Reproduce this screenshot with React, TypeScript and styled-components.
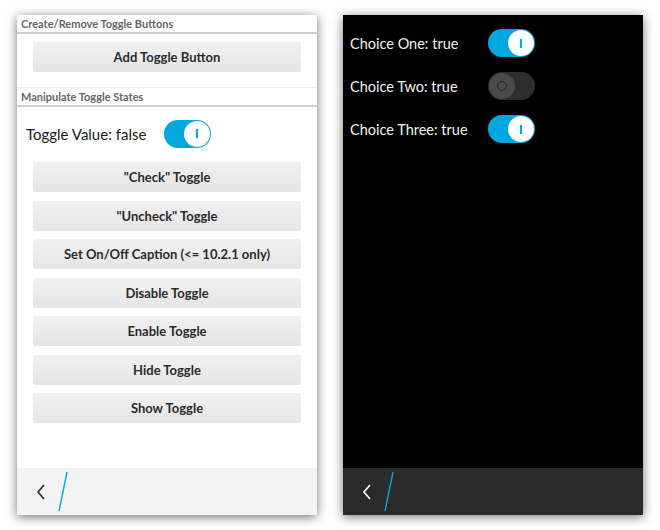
import React from 'react';
import styled, { createGlobalStyle } from 'styled-components';

const GlobalStyle = createGlobalStyle`
  html, body {
    margin: 0;
    padding: 0;
    background: #ffffff;
  }
  body {
    font-family: Lato, 'Open Sans', 'Liberation Sans', sans-serif;
  }
`;

const buttons = [
  '"Check" Toggle',
  '"Uncheck" Toggle',
  'Set On/Off Caption (<= 10.2.1 only)',
  'Disable Toggle',
  'Enable Toggle',
  'Hide Toggle',
  'Show Toggle',
];

const choices = [
  { label: 'Choice One: true', on: true },
  { label: 'Choice Two: true', on: false },
  { label: 'Choice Three: true', on: true },
];

function Toggle({ on }: { on: boolean }) {
  return (
    <Track $on={on}>
      <Knob $on={on}>{on ? <OnMark /> : <OffMark />}</Knob>
    </Track>
  );
}

function ActionBar({ dark }: { dark?: boolean }) {
  return (
    <Bar $dark={dark}>
      <svg width="12" height="18" viewBox="0 0 12 18">
        <polyline
          points="9,2 3,9 9,16"
          fill="none"
          stroke={dark ? '#f0f0f0' : '#333'}
          strokeWidth="1.8"
        />
      </svg>
      <svg width="12" height="42" viewBox="0 0 12 42">
        <line x1="10" y1="1" x2="2" y2="40" stroke="#00a8df" strokeWidth="1.4" />
      </svg>
    </Bar>
  );
}

export default function App() {
  return (
    <>
      <GlobalStyle />
      <Page>
        <Phone>
          <Content>
            <SectionHeader>Create/Remove Toggle Buttons</SectionHeader>
            <AddArea>
              <Button>Add Toggle Button</Button>
            </AddArea>
            <SectionHeader $divided>Manipulate Toggle States</SectionHeader>
            <ValueRow>
              <ValueLabel>Toggle Value: false</ValueLabel>
              <Toggle on />
            </ValueRow>
            <ButtonList>
              {buttons.map((b) => (
                <Button key={b}>{b}</Button>
              ))}
            </ButtonList>
          </Content>
          <ActionBar />
        </Phone>

        <Phone $dark>
          <Content>
            <ChoiceList>
              {choices.map((c) => (
                <ChoiceRow key={c.label}>
                  <ChoiceLabel>{c.label}</ChoiceLabel>
                  <Toggle on={c.on} />
                </ChoiceRow>
              ))}
            </ChoiceList>
          </Content>
          <ActionBar dark />
        </Phone>
      </Page>
    </>
  );
}

const Page = styled.div`
  display: flex;
  gap: 26px;
  padding: 15px 17px;
`;

const Phone = styled.div<{ $dark?: boolean }>`
  display: flex;
  flex-direction: column;
  width: 300px;
  height: 500px;
  background: ${(p) => (p.$dark ? '#000' : '#fff')};
  box-shadow: 0 2px 10px rgba(0, 0, 0, 0.55);
`;

const Content = styled.div`
  flex: 1;
  display: flex;
  flex-direction: column;
`;

const SectionHeader = styled.div<{ $divided?: boolean }>`
  height: 17px;
  line-height: 17px;
  padding-left: 4px;
  font-size: 11px;
  font-weight: 700;
  color: #666;
  border-bottom: 2px solid #cfcfcf;
  border-top: ${(p) => (p.$divided ? '1px solid #ececec' : 'none')};
`;

const AddArea = styled.div`
  padding: 8px 16px 15px;
`;

const Button = styled.div`
  height: 30px;
  display: flex;
  align-items: center;
  justify-content: center;
  border-radius: 2px;
  background: linear-gradient(#f1f1f1, #e5e5e5);
  font-size: 13px;
  font-weight: 700;
  color: #2b2b2b;
`;

const ValueRow = styled.div`
  display: flex;
  align-items: center;
  padding: 12px 9px 0;
  height: 29px;
`;

const ValueLabel = styled.span`
  width: 138px;
  font-size: 15px;
  color: #1a1a1a;
`;

const ButtonList = styled.div`
  display: flex;
  flex-direction: column;
  gap: 8.5px;
  padding: 14px 16px 0;
`;

const ChoiceList = styled.div`
  display: flex;
  flex-direction: column;
  gap: 15px;
  padding: 14px 0 0 7px;
`;

const ChoiceRow = styled.div`
  display: flex;
  align-items: center;
  height: 28px;
`;

const ChoiceLabel = styled.span`
  width: 138px;
  font-size: 14.5px;
  color: #f2f2f2;
`;

const Track = styled.div<{ $on: boolean }>`
  width: 47px;
  height: 28px;
  border-radius: 14px;
  box-sizing: border-box;
  padding: 1px;
  display: flex;
  justify-content: ${(p) => (p.$on ? 'flex-end' : 'flex-start')};
  background: ${(p) => (p.$on ? '#00a8df' : '#2e2e2e')};
`;

const Knob = styled.div<{ $on: boolean }>`
  width: 26px;
  height: 26px;
  border-radius: 50%;
  display: flex;
  align-items: center;
  justify-content: center;
  background: ${(p) => (p.$on ? '#fff' : '#4a4a4a')};
`;

const OnMark = styled.span`
  width: 1.5px;
  height: 9px;
  background: #00a8df;
`;

const OffMark = styled.span`
  width: 8px;
  height: 8px;
  border-radius: 50%;
  border: 1.5px solid #262626;
`;

const Bar = styled.div<{ $dark?: boolean }>`
  height: 47px;
  display: flex;
  align-items: center;
  gap: 10px;
  padding-left: 18px;
  background: ${(p) => (p.$dark ? '#2a2a2a' : '#f3f3f3')};
`;
